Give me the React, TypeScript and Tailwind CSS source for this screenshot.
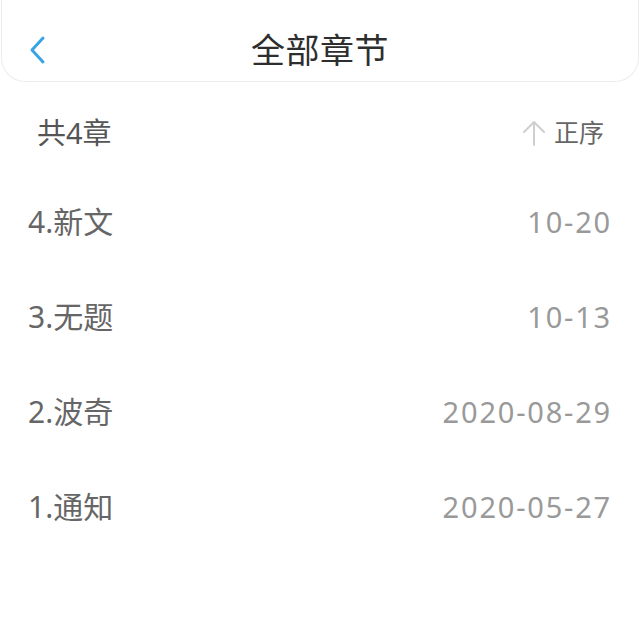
const chapters = [
  { title: "4.新文", date: "10-20" },
  { title: "3.无题", date: "10-13" },
  { title: "2.波奇", date: "2020-08-29" },
  { title: "1.通知", date: "2020-05-27" },
];

const font = { fontFamily: '"Noto Sans", "Noto Sans CJK SC", sans-serif' };

export default function App() {
  return (
    <div className="h-[640px] w-[640px] overflow-hidden bg-white" style={font}>
      <header className="relative mx-[1px] flex h-[82px] items-center justify-center rounded-b-[24px] border border-t-0 border-[#ececec] bg-white">
        <button className="absolute left-[22px] top-[31px] p-1" type="button" aria-label="back">
          <svg width="18" height="30" viewBox="0 0 18 30" fill="none">
            <path d="M15 3 L4 15 L15 27" stroke="#3aa3e3" strokeWidth="3" strokeLinecap="round" strokeLinejoin="round" />
          </svg>
        </button>
        <h1 className="pt-[20px] text-[34px] font-normal tracking-[0.5px] text-[#2e2e2e]">全部章节</h1>
      </header>

      <div className="flex h-[92px] items-center justify-between pl-[37px] pr-[36px] pt-[10px]">
        <span className="text-[29px] text-[#555]">共4章</span>
        <button className="flex items-center gap-[8px]" type="button">
          <svg width="24" height="28" viewBox="0 0 24 28" fill="none">
            <path d="M12 3 V26 M2 13 L12 3 L22 13" stroke="#cfcfcf" strokeWidth="2" strokeLinecap="round" strokeLinejoin="round" />
          </svg>
          <span className="text-[25px] text-[#666]">正序</span>
        </button>
      </div>

      <ul>
        {chapters.map((c) => (
          <li key={c.title} className="flex h-[95px] items-center justify-between pl-[28px] pr-[28px]">
            <span className="text-[30px] text-[#666]">{c.title}</span>
            <span className="text-[29px] tracking-[1.8px] text-[#999]">{c.date}</span>
          </li>
        ))}
      </ul>
    </div>
  );
}
